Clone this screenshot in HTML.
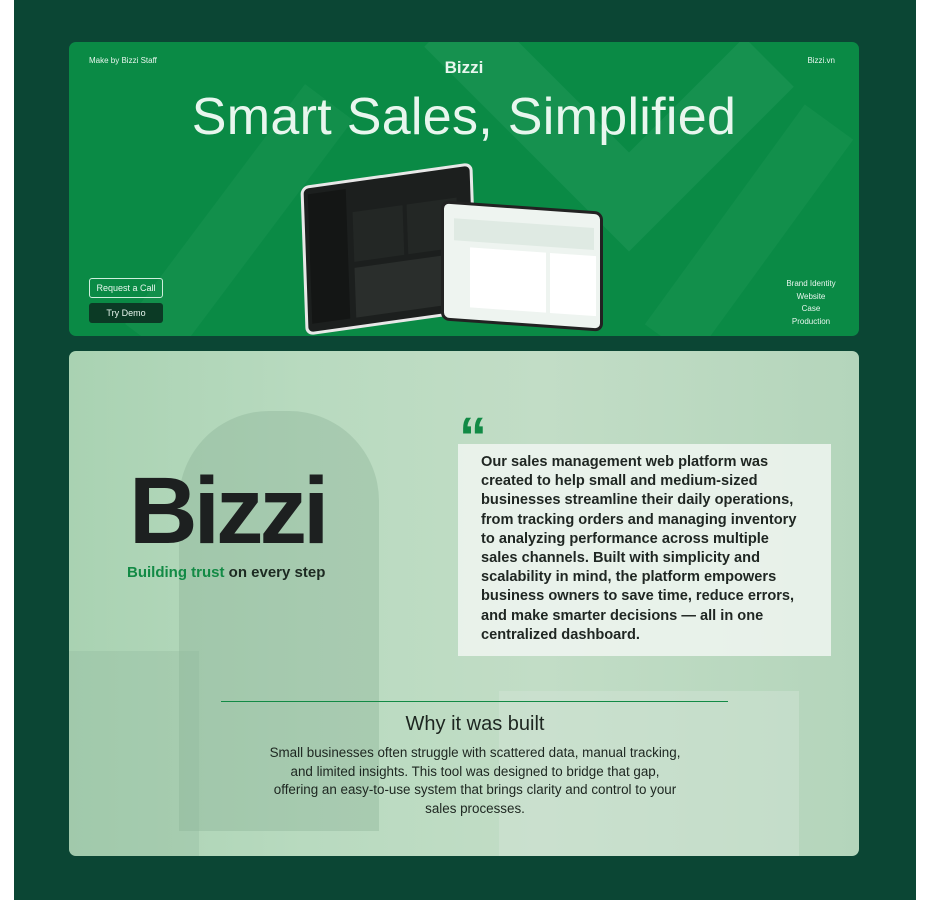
<!DOCTYPE html>
<html><head><meta charset="utf-8"><style>
*{margin:0;padding:0;box-sizing:border-box}
body{width:935px;height:923px;background:#fff;font-family:"Liberation Sans",sans-serif;position:relative;overflow:hidden}
.panel{position:absolute;left:14px;top:0;width:902px;height:900px;background:#0b4634}
.c1{position:absolute;left:69px;top:42px;width:790px;height:294px;border-radius:7px;background:#0a8a45;overflow:hidden}
.c2{position:absolute;left:69px;top:351px;width:790px;height:505px;border-radius:7px;overflow:hidden;
background:linear-gradient(90deg,#a9d2b2 0%,#b8dabf 30%,#c2ddc6 60%,#b4d5bb 100%)}
.abs{position:absolute}
.w{color:#e8f6ee}
</style></head><body>
<div class="panel"></div>
<div class="c1">
 <svg class="abs" style="left:0;top:0" width="790" height="294">
  <path d="M380 -20 L560 160 L700 20" stroke="#1e9656" stroke-width="70" fill="none" opacity=".6"/>
  <path d="M80 300 L260 60 M600 300 L760 80" stroke="#1a9352" stroke-width="60" fill="none" opacity=".5"/>
 </svg>
 <div class="abs w" style="left:20px;top:14px;font-size:8px">Make by Bizzi Staff</div>
 <div class="abs w" style="left:0;width:790px;text-align:center;top:16px;font-size:17px;font-weight:bold">Bizzi</div>
 <div class="abs w" style="right:24px;top:14px;font-size:8px">Bizzi.vn</div>
 <div class="abs w" style="left:0;width:790px;text-align:center;top:45px;font-size:52px;letter-spacing:.3px">Smart Sales, Simplified</div>
 <div class="abs w" style="left:20px;top:236px;width:74px;height:20px;border:1px solid #cfeedd;border-radius:3px;font-size:9px;text-align:center;line-height:18px">Request a Call</div>
 <div class="abs w" style="left:20px;top:261px;width:74px;height:20px;background:#0b3a25;border-radius:3px;font-size:9px;text-align:center;line-height:20px">Try Demo</div>
 <div class="abs w" style="right:18px;top:236px;width:60px;text-align:center;font-size:8px;line-height:12.5px">Brand Identity<br>Website<br>Case<br>Production</div>
 <div class="abs" style="left:234px;top:132px;width:172px;height:150px;background:#1c1f1e;border:3px solid #e8e8e8;border-radius:8px;transform:skewY(-6deg) rotate(-2deg)">
  <div class="abs" style="left:4px;top:6px;width:38px;height:130px;background:#141615"></div>
  <div class="abs" style="left:48px;top:30px;width:50px;height:50px;background:#232725"></div>
  <div class="abs" style="left:102px;top:30px;width:50px;height:50px;background:#232725"></div>
  <div class="abs" style="left:48px;top:86px;width:110px;height:50px;background:#2a2e2c"></div>
 </div>
 <div class="abs" style="left:372px;top:164px;width:162px;height:120px;background:#eef4f0;border:3px solid #222;border-radius:8px;transform:skewY(4deg)">
  <div class="abs" style="left:10px;top:14px;width:140px;height:22px;background:#dfeae3"></div>
  <div class="abs" style="left:26px;top:42px;width:76px;height:60px;background:#fff"></div>
  <div class="abs" style="left:106px;top:42px;width:46px;height:60px;background:#fff"></div>
 </div>
</div>
<div class="c2">
 <div class="abs" style="left:110px;top:60px;width:200px;height:420px;border-radius:90px 90px 0 0;background:#7fa48a;opacity:.3"></div>
 <div class="abs" style="left:430px;top:340px;width:300px;height:165px;background:#d2e3d5;opacity:.5"></div>
 <div class="abs" style="left:0;top:300px;width:130px;height:205px;background:#8fb59a;opacity:.3"></div>
 <div class="abs" style="left:60px;top:113px;font-size:95px;font-weight:bold;color:#1d2020;letter-spacing:-4px;line-height:1">Bizzi</div>
 <div class="abs" style="left:58px;top:213px;font-size:15px;font-weight:bold;color:#1d2a22"><span style="color:#128a45">Building trust</span> on every step</div>
 <div class="abs" style="left:390px;top:58px;font-size:56px;font-weight:bold;color:#118a45;line-height:1">“</div>
 <div class="abs" style="left:389px;top:93px;width:373px;height:212px;background:rgba(240,246,241,.85)"></div>
 <div class="abs" style="left:412px;top:102px;width:360px;font-size:14.6px;line-height:19.2px;font-weight:bold;color:#1f2622;white-space:nowrap">Our sales management web platform was<br>created to help small and medium-sized<br>businesses streamline their daily operations,<br>from tracking orders and managing inventory<br>to analyzing performance across multiple<br>sales channels. Built with simplicity and<br>scalability in mind, the platform empowers<br>business owners to save time, reduce errors,<br>and make smarter decisions — all in one<br>centralized dashboard.</div>
 <div class="abs" style="left:152px;top:350px;width:507px;height:1px;background:#128a45"></div>
 <div class="abs" style="left:0;width:812px;text-align:center;top:362px;font-size:20px;color:#1d2620">Why it was built</div>
 <div class="abs" style="left:106px;width:600px;text-align:center;top:393px;font-size:13.4px;line-height:18.7px;color:#1d2620;white-space:nowrap">Small businesses often struggle with scattered data, manual tracking,<br>and limited insights. This tool was designed to bridge that gap,<br>offering an easy-to-use system that brings clarity and control to your<br>sales processes.</div>
</div>
</body></html>
